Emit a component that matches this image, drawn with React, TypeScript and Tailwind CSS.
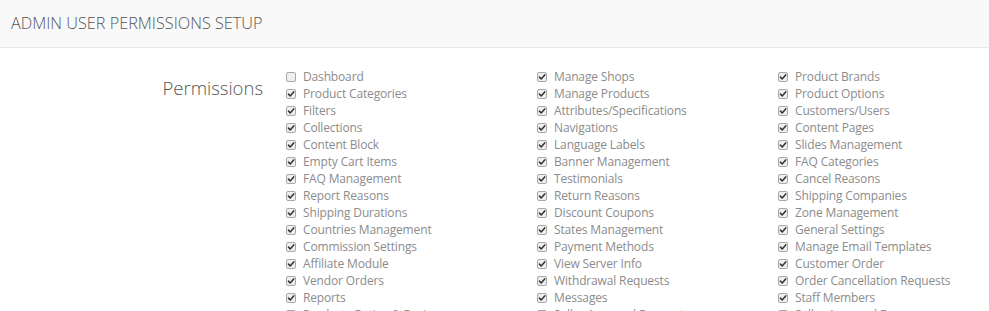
import React from "react";

type Perm = { label: string; checked: boolean };

const col1: Perm[] = [
  { label: "Dashboard", checked: false },
  { label: "Product Categories", checked: true },
  { label: "Filters", checked: true },
  { label: "Collections", checked: true },
  { label: "Content Block", checked: true },
  { label: "Empty Cart Items", checked: true },
  { label: "FAQ Management", checked: true },
  { label: "Report Reasons", checked: true },
  { label: "Shipping Durations", checked: true },
  { label: "Countries Management", checked: true },
  { label: "Commission Settings", checked: true },
  { label: "Affiliate Module", checked: true },
  { label: "Vendor Orders", checked: true },
  { label: "Reports", checked: true },
  { label: "Products Rating & Reviews", checked: false },
];

const col2: Perm[] = [
  { label: "Manage Shops", checked: true },
  { label: "Manage Products", checked: true },
  { label: "Attributes/Specifications", checked: true },
  { label: "Navigations", checked: true },
  { label: "Language Labels", checked: true },
  { label: "Banner Management", checked: true },
  { label: "Testimonials", checked: true },
  { label: "Return Reasons", checked: true },
  { label: "Discount Coupons", checked: true },
  { label: "States Management", checked: true },
  { label: "Payment Methods", checked: true },
  { label: "View Server Info", checked: true },
  { label: "Withdrawal Requests", checked: true },
  { label: "Messages", checked: true },
  { label: "Seller Approval Requests", checked: false },
];

const col3: Perm[] = [
  { label: "Product Brands", checked: true },
  { label: "Product Options", checked: true },
  { label: "Customers/Users", checked: true },
  { label: "Content Pages", checked: true },
  { label: "Slides Management", checked: true },
  { label: "FAQ Categories", checked: true },
  { label: "Cancel Reasons", checked: true },
  { label: "Shipping Companies", checked: true },
  { label: "Zone Management", checked: true },
  { label: "General Settings", checked: true },
  { label: "Manage Email Templates", checked: true },
  { label: "Customer Order", checked: true },
  { label: "Order Cancellation Requests", checked: true },
  { label: "Staff Members", checked: true },
  { label: "Seller Approval Forms", checked: false },
];

const Box = ({ checked }: { checked: boolean }) => (
  <span className="flex h-[10px] w-[10px] shrink-0 items-center justify-center rounded-[2px] border border-[#a8a8a8] bg-[#efefef]">
    {checked && (
      <svg className="h-[8px] w-[8px]" viewBox="0 0 10 10" fill="none">
        <path
          d="M1.8 5.2 4 7.4 8.4 2.4"
          stroke="#333"
          strokeWidth={1.9}
          strokeLinecap="round"
          strokeLinejoin="round"
        />
      </svg>
    )}
  </span>
);

const Column = ({ items, width }: { items: Perm[]; width: string }) => (
  <ul className={`${width} shrink-0`}>
    {items.map((p) => (
      <li key={p.label} className="flex h-[17px] items-center gap-[7px]">
        <Box checked={p.checked} />
        <span className="whitespace-nowrap text-[12px] tracking-[-0.15px] text-[#8c8c8c]">
          {p.label}
        </span>
      </li>
    ))}
  </ul>
);

export default function App() {
  return (
    <div
      className="h-[311px] w-[989px] overflow-hidden bg-white"
      style={{ fontFamily: '"Open Sans", "Liberation Sans", sans-serif' }}
    >
      <div className="flex h-[48px] items-center border-b border-[#e9e9e9] bg-[#f9f9f9] px-[11px]">
        <h1 className="text-[16.25px] font-light text-[#555]">
          ADMIN USER PERMISSIONS SETUP
        </h1>
      </div>
      <div className="flex pt-[20px]">
        <div className="w-[264px] shrink-0 pr-[1px] pt-[6px] text-right text-[18.5px] font-light text-[#555]">
          Permissions
        </div>
        <div className="flex pl-[22px]">
          <Column items={col1} width="w-[251px]" />
          <Column items={col2} width="w-[241px]" />
          <Column items={col3} width="w-[200px]" />
        </div>
      </div>
    </div>
  );
}
